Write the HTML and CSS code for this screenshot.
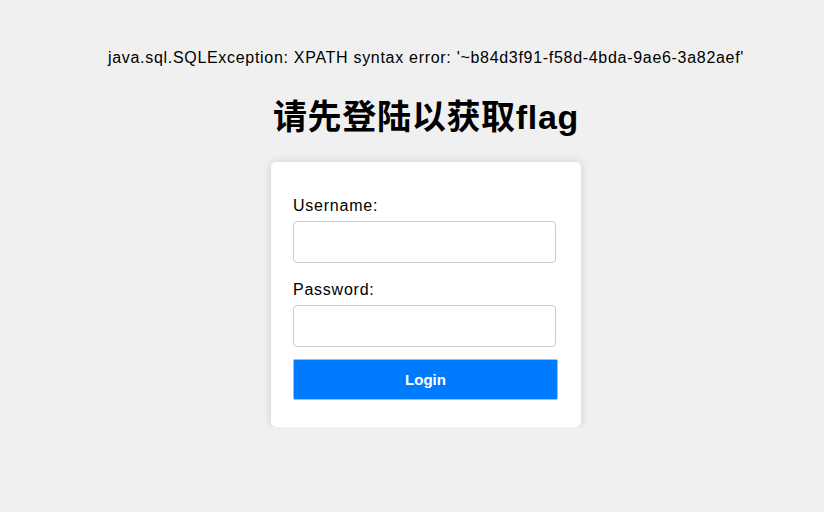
FILE: index.html
```html
<!DOCTYPE html>
<html>
<head>
<meta charset="utf-8">
<link rel="stylesheet" href="styles.css">
</head>
<body>
<div class="page">
  <p class="error">java.sql.SQLException: XPATH syntax error: '~b84d3f91-f58d-4bda-9ae6-3a82aef'</p>
  <h1 class="title">请先登陆以获取flag</h1>
  <form class="card">
    <label class="label">Username:</label>
    <input class="field" type="text">
    <label class="label label-second">Password:</label>
    <input class="field" type="password">
    <button class="btn" type="button">Login</button>
  </form>
</div>
</body>
</html>
```
FILE: styles.css
```css
html, body {
  margin: 0;
  background: #f0f0f0;
}
body {
  font-family: "Liberation Sans", Arial, "Noto Sans CJK SC", sans-serif;
  color: #000;
}
.page {
  display: flex;
  flex-direction: column;
  align-items: center;
  padding: 49px 0 0 28px;
}
.error {
  margin: 0;
  font-size: 16px;
  line-height: 18px;
  letter-spacing: 0.7px;
}
.title {
  margin: 30px 0 24px;
  font-family: "Liberation Sans", Arial, "Noto Sans CJK SC", sans-serif;
  font-size: 34px;
  line-height: 41px;
  font-weight: bold;
  letter-spacing: 0.7px;
}
.card {
  box-sizing: border-box;
  width: 310px;
  background: #fff;
  border-radius: 5px;
  box-shadow: 0 0 10px rgba(0, 0, 0, 0.14);
  padding: 35px 23px 27px 22px;
  display: flex;
  flex-direction: column;
  align-items: flex-start;
}
.label {
  font-size: 16px;
  line-height: 18px;
  margin-bottom: 6px;
  letter-spacing: 0.76px;
}
.label-second {
  margin-top: 18px;
}
.field {
  box-sizing: border-box;
  width: 263px;
  height: 42px;
  border: 1px solid #ccc;
  border-radius: 4px;
  background: #fff;
  margin: 0;
}
.btn {
  box-sizing: border-box;
  width: 265px;
  height: 41px;
  margin-top: 12px;
  background: #007bff;
  color: #fff;
  border: 1px solid #a9bccf;
  border-radius: 2px;
  font-family: "Liberation Sans", Arial, sans-serif;
  font-size: 15px;
  font-weight: bold;
}
```
